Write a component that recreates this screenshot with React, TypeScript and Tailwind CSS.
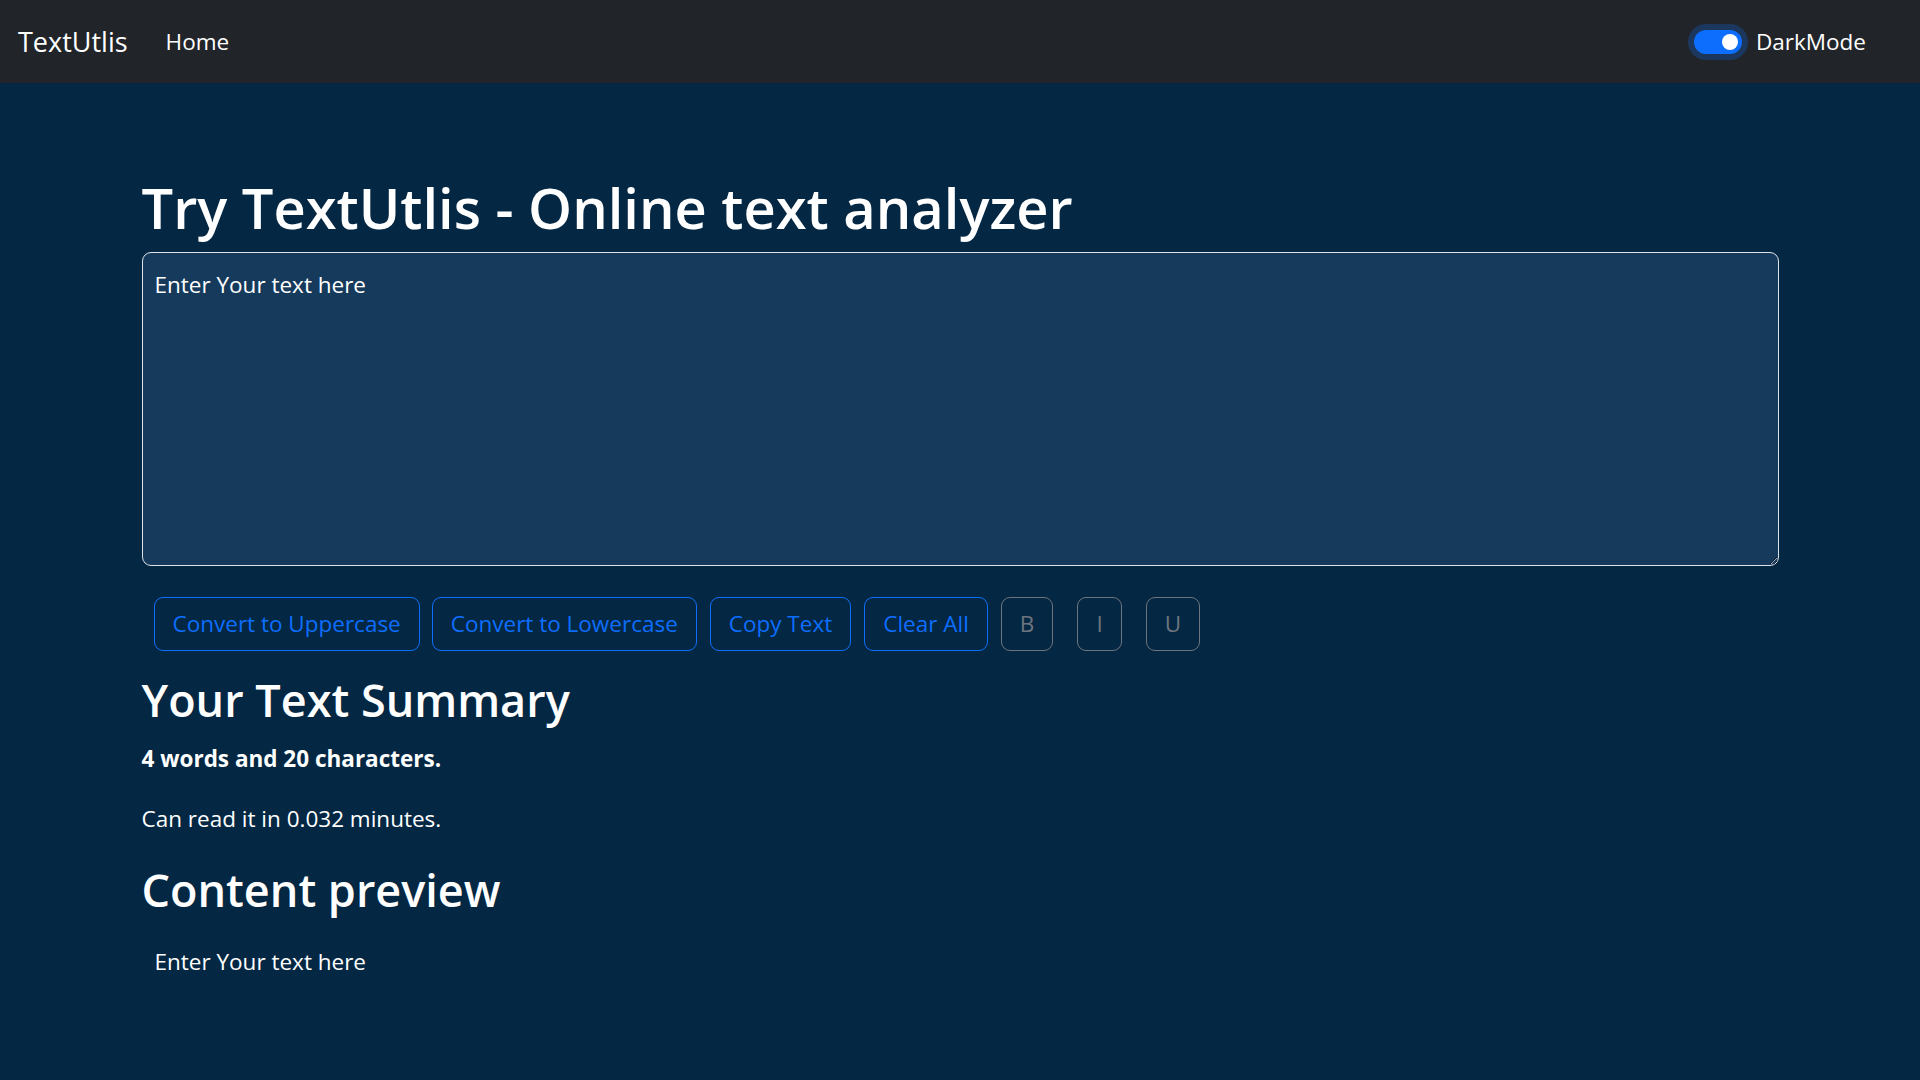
import { useState } from "react";

interface ActionButton {
  label: string;
  tone: "primary" | "secondary";
  gap: string;
}

const buttons: ActionButton[] = [
  { label: "Convert to Uppercase", tone: "primary", gap: "ml-[12px]" },
  { label: "Convert to Lowercase", tone: "primary", gap: "ml-[12px]" },
  { label: "Copy Text", tone: "primary", gap: "ml-[13px]" },
  { label: "Clear All", tone: "primary", gap: "ml-[13px]" },
  { label: "B", tone: "secondary", gap: "ml-[13px]" },
  { label: "I", tone: "secondary", gap: "ml-[24px]" },
  { label: "U", tone: "secondary", gap: "ml-[24px]" },
];

const App = () => {
  const [text, setText] = useState("Enter Your text here");
  const [dark, setDark] = useState(true);

  const words = text.split(/\s+/).filter((w) => w.length > 0).length;
  const minutes = (0.008 * words).toFixed(3).replace(/0+$/, "");

  return (
    <div className="min-h-screen bg-[#042743] font-['Open_Sans',sans-serif] text-white">
      {/* Navbar */}
      <nav className="h-[83px] bg-[#212529] flex items-center justify-between pl-[18px] pr-[54px]">
        <div className="flex items-center">
          <span className="text-[27px] leading-[45px]">TextUtlis</span>
          <a href="/" className="ml-[38px] text-[22.5px] leading-[36px] text-white">
            Home
          </a>
        </div>
        <div className="flex items-center">
          <button
            role="switch"
            aria-checked={dark}
            onClick={() => setDark(!dark)}
            className="w-[48px] h-[24px] rounded-full bg-[#0d6efd] shadow-[0_0_0_6px_rgba(13,110,253,0.25)] flex items-center justify-end pr-[4px]"
          >
            <span className="w-[16px] h-[16px] rounded-full bg-white" />
          </button>
          <span className="ml-[14px] text-[22.5px] leading-[36px]">DarkMode</span>
        </div>
      </nav>

      <main className="w-[1637px] mx-auto pt-[88px] pb-[60px]">
        <h1 className="text-[56px] font-semibold leading-[72px] mb-[9px]">
          Try TextUtlis - Online text analyzer
        </h1>
        <textarea
          value={text}
          onChange={(e) => setText(e.target.value)}
          className="block w-full h-[314px] bg-[#163a5c] border border-[#dee2e6] rounded-[9px] text-white text-[22.5px] leading-[36px] pt-[14px] pl-[12px] pr-[13px] outline-none"
        />

        <div className="flex mt-[31px]">
          {buttons.map((b) => (
            <button
              key={b.label}
              className={`${b.gap} h-[54px] px-[18px] rounded-[9px] border text-[22.5px] leading-[36px] flex items-center ${
                b.tone === "primary"
                  ? "border-[#0d6efd] text-[#0d6efd]"
                  : "border-[#6c757d] text-[#6c757d]"
              }`}
            >
              {b.label}
            </button>
          ))}
        </div>

        <h2 className="mt-[20px] text-[45px] font-semibold leading-[58px] mb-[12px]">
          Your Text Summary
        </h2>
        <p className="text-[22.5px] leading-[36px] font-bold mb-[24px]">
          {words} words and {text.length} characters.
        </p>
        <p className="text-[22.5px] leading-[36px] mb-[24px]">
          Can read it in {minutes} minutes.
        </p>

        <h2 className="text-[45px] font-semibold leading-[58px] mb-[12px]">
          Content preview
        </h2>
        <div className="pt-[13px] pl-[13px]">
          <p className="text-[22.5px] leading-[36px]">{text}</p>
        </div>
      </main>
    </div>
  );
};

export default App;
